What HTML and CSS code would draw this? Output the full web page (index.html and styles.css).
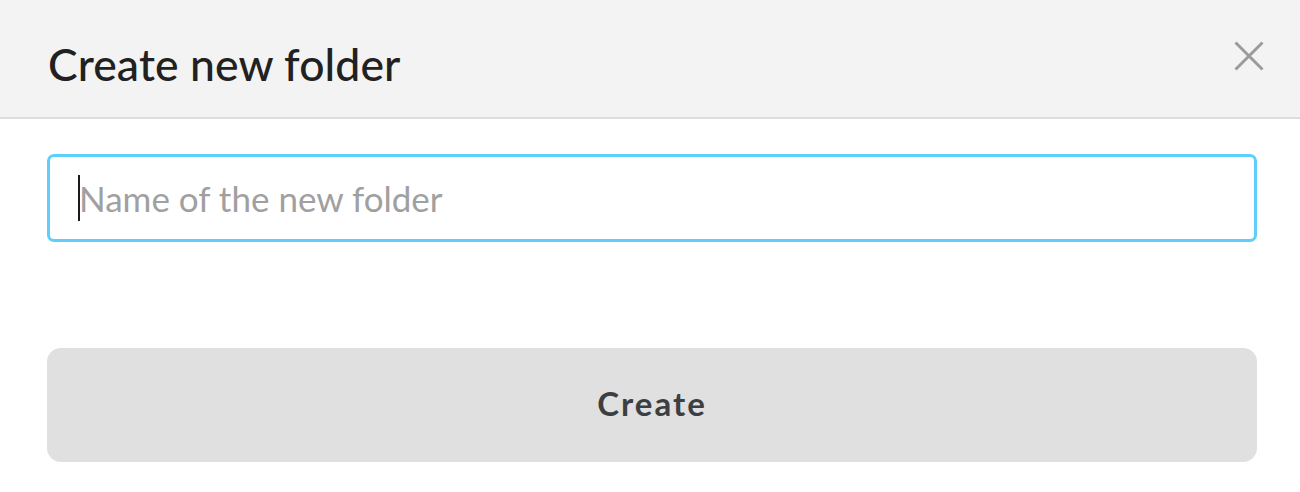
FILE: index.html
```html
<!DOCTYPE html>
<html lang="en">
<head>
<meta charset="utf-8">
<title>Create new folder</title>
<link rel="stylesheet" href="styles.css">
</head>
<body>
<div class="dialog">
  <header class="dialog-header">
    <h1 class="dialog-title">Create new folder</h1>
    <button class="close-btn" aria-label="Close">
      <svg width="30" height="30" viewBox="0 0 30 30" fill="none" stroke="#9b9b9b" stroke-width="3">
        <path d="M1.5 1.5 L28.5 28.5 M28.5 1.5 L1.5 28.5"/>
      </svg>
    </button>
  </header>
  <div class="dialog-body">
    <div class="field">
      <input class="name-input" type="text" placeholder="Name of the new folder">
      <span class="caret"></span>
    </div>
    <button class="create-btn">Create</button>
  </div>
</div>
</body>
</html>
```
FILE: styles.css
```css
* { box-sizing: border-box; }
html, body { margin: 0; padding: 0; background: #ffffff; }
body { font-family: Lato, "Noto Sans", sans-serif; }
.dialog { width: 1300px; }
.dialog-header {
  height: 119px;
  background: #f3f3f3;
  border-bottom: 2px solid #dddddd;
  display: flex;
  align-items: center;
  justify-content: space-between;
  padding: 0 36px 0 48px;
}
.dialog-title {
  margin: 10px 0 0 0;
  font-size: 44.5px;
  font-weight: 500;
  color: #212121;
  letter-spacing: 0.1px;
}
.close-btn {
  border: 0;
  background: none;
  padding: 0;
  width: 30px;
  height: 30px;
  display: flex;
  margin-top: -6px;
}
.dialog-body {
  padding: 35px 43px 30px 47px;
  display: flex;
  flex-direction: column;
  gap: 106px;
}
.field { position: relative; }
.name-input {
  width: 100%;
  height: 88px;
  border: 3px solid #5dcffa;
  border-radius: 7px;
  padding: 0 0 0 29px;
  font-family: inherit;
  font-size: 35px;
  color: #222;
  outline: none;
}
.name-input::placeholder { color: #a0a0a0; }
.caret {
  position: absolute;
  left: 31px;
  top: 21px;
  width: 2px;
  height: 46px;
  background: #1a1a1a;
}
.create-btn {
  height: 114px;
  border: 0;
  border-radius: 14px;
  background: #e0e0e0;
  font-family: inherit;
  font-size: 33px;
  font-weight: 700;
  letter-spacing: 2px;
  color: #3c3f42;
  padding: 0 0 4px 0;
}
```
